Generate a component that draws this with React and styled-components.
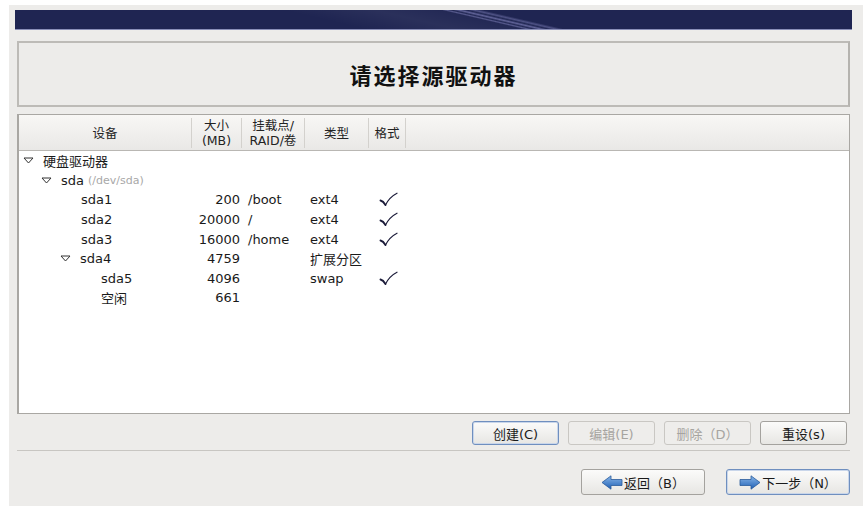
import styled, { createGlobalStyle } from 'styled-components';

const GlobalStyle = createGlobalStyle`
  html, body {
    margin: 0;
    padding: 0;
    background: #ffffff;
  }
  body {
    font-family: "DejaVu Sans", "Noto Sans CJK SC", sans-serif;
    font-size: 13px;
    color: #1a1a1a;
  }
`;

const Panel = styled.div`
  margin: 5px 0 0 9px;
  width: 854px;
  height: 501px;
  box-sizing: border-box;
  padding: 5px 13px 0 8px;
  background: #edecea;
  display: flex;
  flex-direction: column;
`;

const Banner = styled.div`
  height: 19px;
  margin: 0 -2px;
  background:
    linear-gradient(13deg, transparent 55.2%, rgba(150, 150, 210, 0.45) 55.8%, transparent 56.4%,
      rgba(150, 150, 210, 0.55) 57.2%, transparent 58%, rgba(150, 150, 210, 0.4) 58.8%, transparent 59.8%),
    linear-gradient(13deg, transparent 38%, rgba(255, 255, 255, 0.05) 48%, transparent 60%),
    #1f2552;
  border-bottom: 1px solid #8a8fb8;
`;

const TitleBox = styled.div`
  margin-top: 11px;
  height: 66px;
  box-sizing: border-box;
  border: 2px solid #bdbbb7;
  border-right-color: #b5b3af;
  background: #edecea;
  display: flex;
  align-items: center;
  justify-content: center;
`;

const Title = styled.h1`
  margin: 0;
  font-family: "Noto Sans CJK SC", sans-serif;
  font-size: 22px;
  font-weight: bold;
  letter-spacing: 2px;
  color: #111;
`;

const TableBox = styled.div`
  margin-top: 7px;
  height: 300px;
  box-sizing: border-box;
  border: 1px solid #a9a7a3;
  border-left-width: 2px;
  background: #ffffff;
  display: flex;
  flex-direction: column;
`;

const COLS = '173px 50px 63px 64px 37px 1fr';

const HeaderRow = styled.div`
  display: grid;
  grid-template-columns: ${COLS};
  height: 36px;
  box-sizing: border-box;
  background: linear-gradient(#f8f7f5, #e9e8e6);
  border-bottom: 1px solid #b9b7b3;
`;

const HeadCell = styled.div`
  display: flex;
  align-items: center;
  justify-content: center;
  text-align: center;
  font-size: 12.5px;
  line-height: 15px;
  color: #222;
  margin: 3px 0;
  border-right: ${(p) => (p.$last ? 'none' : '1px solid #d3d1cd')};
`;

const Body = styled.div`
  padding-top: 0;
`;

const Row = styled.div`
  display: grid;
  grid-template-columns: ${COLS};
  height: 19.6px;
  align-items: center;
  white-space: nowrap;
`;

const NameCell = styled.div`
  display: flex;
  align-items: center;
  padding-left: ${(p) => p.$indent}px;
`;

const Expander = styled.svg`
  width: 11px;
  height: 7px;
  margin-right: 9px;
  flex: none;
`;

const Sub = styled.span`
  margin-left: 4px;
  font-size: 11px;
  color: #a8a8a8;
`;

const SizeCell = styled.div`
  text-align: right;
  padding-right: 2px;
`;

const TextCell = styled.div`
  padding-left: ${(p) => p.$pad}px;
`;

const CheckCell = styled.div`
  padding-left: 10px;
  display: flex;
  align-items: center;
`;

const ButtonBar = styled.div`
  margin-top: 7px;
  display: flex;
  justify-content: flex-end;
  gap: 9px;
  padding-right: 3px;
`;

const ActionButton = styled.button`
  width: 87px;
  height: 24px;
  box-sizing: border-box;
  padding: 0;
  border-radius: 3px;
  font-family: "DejaVu Sans", "Noto Sans CJK SC", sans-serif;
  font-size: 13px;
  color: ${(p) => (p.disabled ? '#a6a4a0' : '#1a1a1a')};
  border: 1px solid ${(p) => (p.$focus ? '#6f8fbf' : p.disabled ? '#c9c7c3' : '#a4a29e')};
  background: ${(p) => (p.disabled ? '#eeedeb' : 'linear-gradient(#fbfbfa, #e7e6e3)')};
  box-shadow: ${(p) => (p.$focus ? 'inset 0 0 0 1px #c9d6ea' : 'none')};
`;

const Divider = styled.hr`
  margin: 5px 0 0;
  border: none;
  border-top: 1px solid #c8c6c2;
  height: 0;
`;

const NavBar = styled.div`
  margin-top: 18px;
  display: flex;
  justify-content: flex-end;
  gap: 21px;
`;

const NavButton = styled.button`
  width: 124px;
  height: 26px;
  box-sizing: border-box;
  padding: 0;
  border-radius: 3px;
  display: flex;
  align-items: center;
  justify-content: center;
  gap: 1px;
  font-family: "DejaVu Sans", "Noto Sans CJK SC", sans-serif;
  font-size: 13px;
  color: #1a1a1a;
  border: 1px solid ${(p) => (p.$focus ? '#6f8fbf' : '#a4a29e')};
  background: linear-gradient(#fbfbfa, #e7e6e3);
  box-shadow: ${(p) => (p.$focus ? 'inset 0 0 0 1px #c9d6ea' : 'none')};
`;

const ArrowIcon = styled.svg`
  width: 22px;
  height: 15px;
`;

function Triangle() {
  return (
    <Expander viewBox="0 0 11 7">
      <polygon points="1,1 10,1 5.5,6" fill="none" stroke="#333" strokeWidth="1" strokeLinejoin="round" />
    </Expander>
  );
}

function Check() {
  return (
    <svg width="19" height="15" viewBox="0 0 19 15">
      <path d="M1.5 8.5 C3.5 9 5 10.5 6.5 13" fill="none" stroke="#1c1c3a" strokeWidth="1.9" strokeLinecap="round" />
      <path d="M6.5 13 C9 8 12.5 4 18 1.2" fill="none" stroke="#1c1c3a" strokeWidth="1.2" strokeLinecap="round" />
    </svg>
  );
}

function Arrow({ dir }) {
  const flip = dir === 'left' ? 'translate(22,0) scale(-1,1)' : undefined;
  return (
    <ArrowIcon viewBox="0 0 22 15">
      <defs>
        <linearGradient id={`ag-${dir}`} x1="0" y1="0" x2="0" y2="1">
          <stop offset="0" stopColor="#8ab8ea" />
          <stop offset="1" stopColor="#1f5fb4" />
        </linearGradient>
      </defs>
      <g transform={flip}>
        <polygon
          points="1,4.5 12,4.5 12,0.8 21,7.5 12,14.2 12,10.5 1,10.5"
          fill={`url(#ag-${dir})`}
          stroke="#2a5a9a"
          strokeWidth="0.8"
          strokeLinejoin="round"
        />
      </g>
    </ArrowIcon>
  );
}

const rows = [
  { indent: 4, tree: true, name: '硬盘驱动器' },
  { indent: 22, tree: true, name: 'sda', sub: '(/dev/sda)' },
  { indent: 62, name: 'sda1', size: '200', mount: '/boot', type: 'ext4', fmt: true },
  { indent: 62, name: 'sda2', size: '20000', mount: '/', type: 'ext4', fmt: true },
  { indent: 62, name: 'sda3', size: '16000', mount: '/home', type: 'ext4', fmt: true },
  { indent: 41, tree: true, name: 'sda4', size: '4759', type: '扩展分区' },
  { indent: 82, name: 'sda5', size: '4096', type: 'swap', fmt: true },
  { indent: 82, name: '空闲', size: '661' },
];

export default function App() {
  return (
    <>
      <GlobalStyle />
      <Panel>
        <Banner />
        <TitleBox>
          <Title>请选择源驱动器</Title>
        </TitleBox>
        <TableBox>
          <HeaderRow>
            <HeadCell>设备</HeadCell>
            <HeadCell>大小<br />(MB)</HeadCell>
            <HeadCell>挂载点/<br />RAID/卷</HeadCell>
            <HeadCell>类型</HeadCell>
            <HeadCell>格式</HeadCell>
            <HeadCell $last />
          </HeaderRow>
          <Body>
            {rows.map((r) => (
              <Row key={r.name}>
                <NameCell $indent={r.indent}>
                  {r.tree && <Triangle />}
                  {r.name}
                  {r.sub && <Sub>{r.sub}</Sub>}
                </NameCell>
                <SizeCell>{r.size}</SizeCell>
                <TextCell $pad={6}>{r.mount}</TextCell>
                <TextCell $pad={5}>{r.type}</TextCell>
                <CheckCell>{r.fmt && <Check />}</CheckCell>
                <div />
              </Row>
            ))}
          </Body>
        </TableBox>
        <ButtonBar>
          <ActionButton $focus>创建(C)</ActionButton>
          <ActionButton disabled>编辑(E)</ActionButton>
          <ActionButton disabled>删除（D）</ActionButton>
          <ActionButton>重设(s)</ActionButton>
        </ButtonBar>
        <Divider />
        <NavBar>
          <NavButton>
            <Arrow dir="left" />
            返回（B）
          </NavButton>
          <NavButton $focus>
            <Arrow dir="right" />
            下一步（N）
          </NavButton>
        </NavBar>
      </Panel>
    </>
  );
}
